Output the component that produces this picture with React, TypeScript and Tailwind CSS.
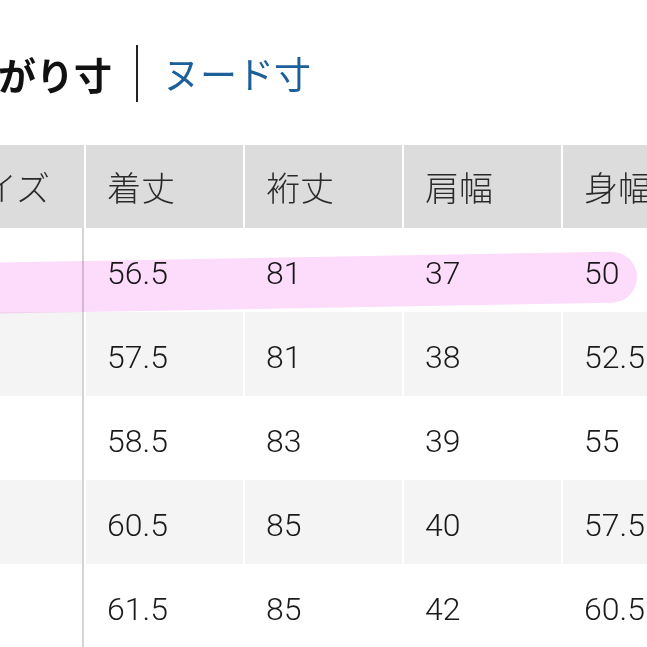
const headers = ["着丈", "裄丈", "肩幅", "身幅"];

const rows = [
  ["56.5", "81", "37", "50"],
  ["57.5", "81", "38", "52.5"],
  ["58.5", "83", "39", "55"],
  ["60.5", "85", "40", "57.5"],
  ["61.5", "85", "42", "60.5"],
];

const jp = "font-['Noto_Sans_CJK_JP',sans-serif]";
const num = "font-['Roboto','Noto_Sans_CJK_JP',sans-serif]";

export default function App() {
  return (
    <div className="relative h-[647px] w-[647px] overflow-hidden bg-white">
      {/* tabs */}
      <div className={`flex h-[145px] items-start pt-[45px] ${jp}`}>
        <div className="flex h-[57px] items-center">
          <span className="ml-[-2px] whitespace-nowrap text-[38px] font-bold leading-none text-[#111]">
            がり寸
          </span>
          <span className="ml-[24px] h-[57px] w-[2px] bg-[#222]" />
          <span className="ml-[25px] whitespace-nowrap text-[37px] leading-none text-[#1d5f98]">
            ヌード寸
          </span>
        </div>
      </div>

      {/* table */}
      <div className="flex flex-col">
        <div className="flex h-[83px] gap-[2px] bg-white">
          <div className={`flex w-[84px] shrink-0 items-center justify-end bg-[#dcdcdc] pr-[34px] ${jp}`}>
            <span className="whitespace-nowrap text-[34px] font-light text-[#2a2a2a]">サイズ</span>
          </div>
          {headers.map((h) => (
            <div
              key={h}
              className={`flex w-[157px] shrink-0 items-center bg-[#dcdcdc] pl-[21px] ${jp}`}
            >
              <span className="whitespace-nowrap text-[34px] font-light text-[#2a2a2a]">{h}</span>
            </div>
          ))}
        </div>

        {rows.map((r, i) => {
          const bg = i % 2 === 1 ? "bg-[#f4f4f4]" : "bg-white";
          return (
            <div key={i} className="flex h-[84px] gap-[2px] bg-white">
              <div className={`w-[84px] shrink-0 border-r-2 border-[#d4d4d4] ${bg}`} />
              {r.map((v, j) => (
                <div
                  key={j}
                  className={`flex w-[157px] shrink-0 items-center pl-[21px] pt-[6px] ${bg} ${num}`}
                >
                  <span className="whitespace-nowrap text-[32px] font-light text-[#1a1a1a]">{v}</span>
                </div>
              ))}
            </div>
          );
        })}
      </div>

      {/* marker highlight */}
      <div className="pointer-events-none absolute left-[-20px] top-[257px] h-[51px] w-[657px] -rotate-1 rounded-r-[26px] bg-[#fcdcfa] mix-blend-multiply" />
    </div>
  );
}
